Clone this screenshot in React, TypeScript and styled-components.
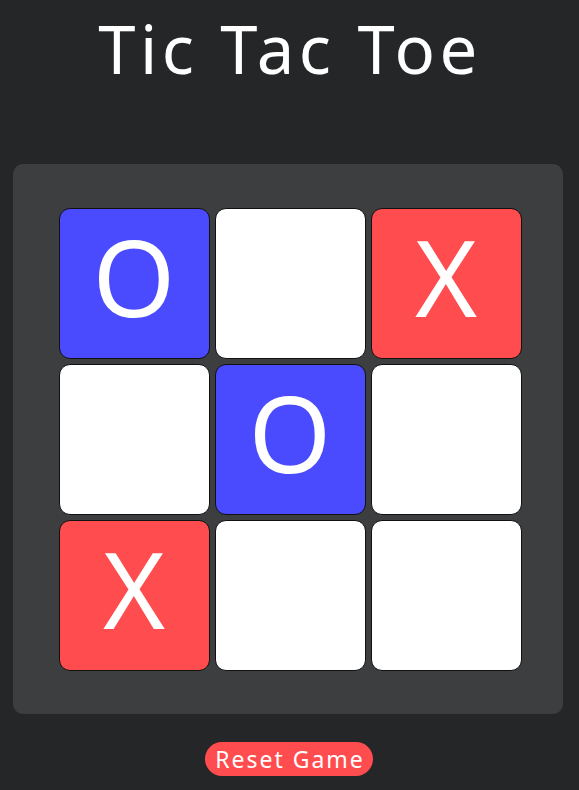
import React, { useState } from "react";
import styled, { createGlobalStyle } from "styled-components";

const Global = createGlobalStyle`
  html, body { margin: 0; padding: 0; background: #252628; }
  body { font-family: "Noto Sans", "Open Sans", sans-serif; color: #fff; }
`;

const Page = styled.div`
  width: 576px;
  min-height: 790px;
  display: flex;
  flex-direction: column;
  align-items: center;
  box-sizing: border-box;
  padding-top: 8px;
`;

const Title = styled.h1`
  margin: 0;
  font-size: 67px;
  font-weight: 400;
  line-height: 80px;
  letter-spacing: 4.5px;
  padding-left: 4px;
  color: #fff;
`;

const Panel = styled.div`
  margin-top: 76px;
  width: 550px;
  height: 550px;
  box-sizing: border-box;
  background: #3d3e40;
  border-radius: 10px;
  display: flex;
  align-items: center;
  justify-content: center;
`;

const Grid = styled.div`
  display: grid;
  grid-template-columns: repeat(3, 151px);
  grid-template-rows: repeat(3, 151px);
  gap: 5px;
  transform: translate(2px, 0);
`;

type Mark = "X" | "O" | "";

const Cell = styled.button<{ $mark: Mark }>`
  box-sizing: border-box;
  width: 151px;
  height: 151px;
  border: 1px solid #111;
  border-radius: 11px;
  padding: 0 0 14px 0;
  background: ${(p) => (p.$mark === "O" ? "#4a4aff" : p.$mark === "X" ? "#ff4d4f" : "#ffffff")};
  color: #fff;
  font-family: "Noto Sans", "Open Sans", sans-serif;
  font-size: 106px;
  line-height: 1;
  display: flex;
  align-items: center;
  justify-content: center;
  cursor: pointer;
`;

const Reset = styled.button`
  margin-top: 28px;
  height: 34px;
  padding: 0 8px 0 10px;
  border: none;
  border-radius: 17px;
  background: #ff4d4f;
  color: #fff;
  font-family: "Noto Sans", "Open Sans", sans-serif;
  font-size: 23px;
  letter-spacing: 2px;
  line-height: 34px;
  cursor: pointer;
  transform: translateX(1px);
`;

const initial: Mark[] = ["O", "", "X", "", "O", "", "X", "", ""];

export default function App() {
  const [board, setBoard] = useState<Mark[]>(initial);
  return (
    <>
      <Global />
      <Page>
        <Title>Tic Tac Toe</Title>
        <Panel>
          <Grid>
            {board.map((m, i) => (
              <Cell key={i} $mark={m}>
                {m}
              </Cell>
            ))}
          </Grid>
        </Panel>
        <Reset onClick={() => setBoard(Array(9).fill(""))}>Reset Game</Reset>
      </Page>
    </>
  );
}
